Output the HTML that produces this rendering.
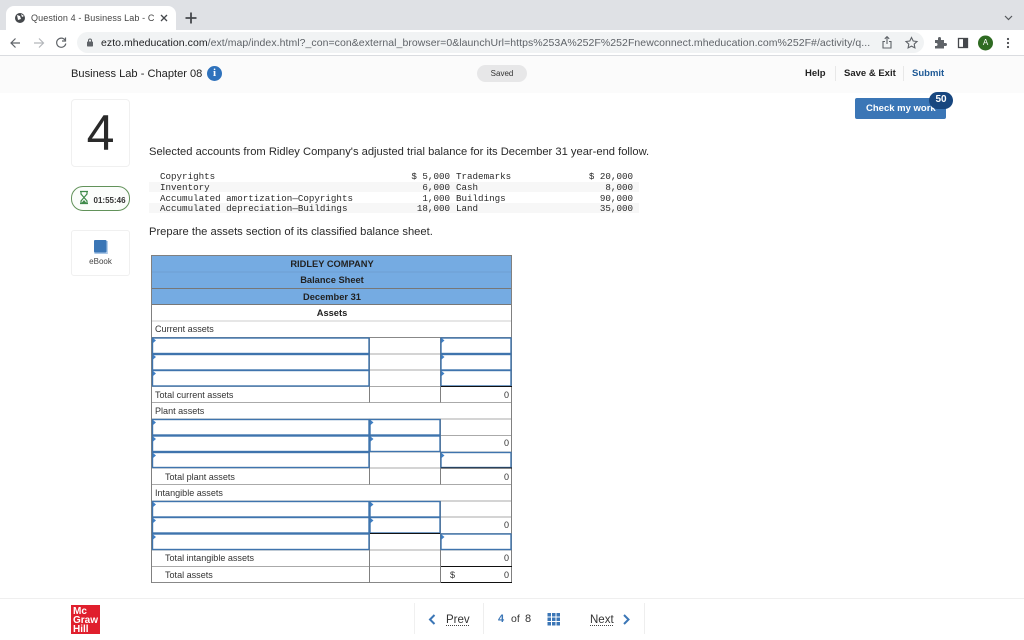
<!DOCTYPE html>
<html lang="en"><head><meta charset="utf-8"><title>Question 4 - Business Lab</title>
<style>
html,body{margin:0;padding:0;background:#fff}
body{width:1024px;height:640px;position:relative;overflow:hidden;font-family:"Liberation Sans",sans-serif;color:#222}
.a{position:absolute;white-space:nowrap}
pre.a{margin:0;font-family:"Liberation Mono",monospace;font-size:9.2px;line-height:10.800px;color:#2a2a2a;white-space:pre}
</style></head><body>
<div class="a" style="left:0;top:0;width:1024px;height:30px;background:#dfe1e5"></div>
<div class="a" style="left:6px;top:6px;width:170px;height:24px;background:#fff;border-radius:8px 8px 0 0"></div>
<div class="a" style="left:77px;top:32px;width:847px;height:21px;border-radius:11px;background:#f1f3f4"></div>
<svg class="a" style="left:0;top:0" width="1024" height="56" viewBox="0 0 1024 56">
<circle cx="20" cy="18" r="5" fill="#45484c"/><path d="M17 15l3 1 1 3-3 1zM21 14l3 2-2 1z" fill="#fff"/>
<path d="M161 15l6 6M167 15l-6 6" stroke="#45484c" stroke-width="1.300"/>
<path d="M191 12.500v11M185.500 18h11" stroke="#45484c" stroke-width="1.800"/>
<path d="M1005 16l3.500 3.500 3.500-3.500" fill="none" stroke="#55585c" stroke-width="1.200"/>
<path d="M20 43h-8.500M15.500 38.500l-4.500 4.500 4.500 4.500" fill="none" stroke="#5f6368" stroke-width="1.200"/>
<path d="M34 43h9M39 38.500l4.500 4.500-4.500 4.500" fill="none" stroke="#b4b7bb" stroke-width="1.200"/>
<path d="M65 40a4.600 4.600 0 1 0 .8 3.500M65.500 37.500v3.500h-3.500" fill="none" stroke="#5f6368" stroke-width="1.200"/>
<rect x="87" y="41.500" width="6" height="5" rx=".8" fill="#5f6368"/><path d="M88.500 42v-1.500a1.500 1.500 0 0 1 3 0V42" fill="none" stroke="#5f6368"/>
<path d="M885 41.500h-2v6.500h8v-6.500h-2M887 44v-7M884.800 38.800l2.200-2.200 2.200 2.200" fill="none" stroke="#5f6368" stroke-width="1.100"/>
<path d="M911.500 37.500l1.700 3.500 3.800.5-2.800 2.600.7 3.800-3.400-1.800-3.400 1.800.7-3.800-2.800-2.600 3.800-.5z" fill="none" stroke="#5f6368" stroke-width="1.100"/>
<path d="M935 40h3v-1.500a1.500 1.500 0 0 1 3 0V40h3v3h1.500a1.500 1.500 0 0 1 0 3H944v2.500h-9V46h1a1.500 1.500 0 0 0 0-3h-1z" fill="#5f6368"/>
<rect x="958.500" y="38.500" width="9" height="9" fill="none" stroke="#45484c" stroke-width="1.300"/><rect x="963" y="38.500" width="5" height="9" fill="#45484c"/>
<circle cx="985.500" cy="43" r="7.500" fill="#2f6b22"/>
<circle cx="1008" cy="39" r="1.100" fill="#45484c"/><circle cx="1008" cy="43" r="1.100" fill="#45484c"/><circle cx="1008" cy="47" r="1.100" fill="#45484c"/>
</svg>
<div class="a" style="left:31px;top:12px;font-size:9px;line-height:12px;color:#444;width:124px;overflow:hidden;letter-spacing:.12px">Question 4 - Business Lab - Ch</div>
<div class="a" style="left:101px;top:36px;font-size:10.500px;line-height:14px;color:#5f6368;width:772px;overflow:hidden;letter-spacing:.05px"><span style="color:#202124">ezto.mheducation.com</span>/ext/map/index.html?_con=con&amp;external_browser=0&amp;launchUrl=https%253A%252F%252Fnewconnect.mheducation.com%252F#/activity/q...</div>
<div class="a" style="left:978px;top:38px;width:15px;text-align:center;font-size:8px;line-height:10px;color:#fff">A</div>
<div class="a" style="left:0;top:55px;width:1024px;height:1px;background:#dadce0"></div>

<div class="a" style="left:0;top:56px;width:1024px;height:37px;background:#fbfbfb"></div>
<div class="a" style="left:71px;top:66.500px;font-size:11.100px;line-height:14px;color:#222">Business Lab - Chapter 08</div>
<div class="a" style="left:207px;top:66px;width:15px;height:15px;border-radius:50%;background:#2f72bc;color:#fff;font:bold 11px/15px 'Liberation Serif',serif;text-align:center">i</div>
<div class="a" style="left:477px;top:65px;width:50px;height:17px;border-radius:9px;background:#e7e7e8;color:#333;font-size:8px;line-height:17px;text-align:center">Saved</div>
<div class="a" style="left:805px;top:68px;font-size:9.500px;line-height:12px;font-weight:bold;color:#222">Help</div>
<div class="a" style="left:835px;top:66px;width:1px;height:15px;background:#e8e8e8"></div>
<div class="a" style="left:844px;top:68px;font-size:9.500px;line-height:12px;font-weight:bold;color:#222">Save &amp; Exit</div>
<div class="a" style="left:903px;top:66px;width:1px;height:15px;background:#e8e8e8"></div>
<div class="a" style="left:912px;top:68px;font-size:9.500px;line-height:12px;font-weight:bold;color:#1f5a96">Submit</div>

<div class="a" style="left:855px;top:98px;width:91px;height:21px;border-radius:2px;background:#3b76b6;color:#fff;font-size:9.500px;font-weight:bold;line-height:21px;text-indent:11px;overflow:hidden">Check my work</div>
<div class="a" style="left:929px;top:92px;width:24px;height:17px;border-radius:9px;background:#17467f;color:#fff;font-size:10px;font-weight:bold;line-height:16px;text-align:center">50</div>

<div class="a" style="left:71px;top:99px;width:57px;height:66px;border:1px solid #f0f0f0;border-radius:4px"></div>
<div class="a" style="left:71px;top:105px;width:59px;text-align:center;font-size:50px;line-height:56px;color:#2a2a2a">4</div>

<div class="a" style="left:71px;top:186px;width:57px;height:23px;border:1px solid #62925a;border-radius:12px;background:#fbfdfb"></div>
<svg class="a" style="left:78px;top:190px" width="12" height="15" viewBox="0 0 12 15"><path d="M2 1.500h8M2 13.500h8M3 1.500v2.500l3 3.500 3-3.500V1.500M3 13.500V11l3-3.500 3 3.500v2.500" fill="none" stroke="#3f8a4a" stroke-width="1.200"/><path d="M3.500 13l2.500-3 2.500 3z" fill="#3f8a4a"/></svg>
<div class="a" style="left:93.500px;top:195px;font-size:8px;font-weight:bold;line-height:12px;color:#333">01:55:46</div>

<div class="a" style="left:71px;top:230px;width:57px;height:44px;border:1px solid #f0f0f0;border-radius:3px"></div>
<svg class="a" style="left:94px;top:240px" width="14" height="15" viewBox="0 0 14 15"><rect x="0" y="0" width="12.500" height="12.500" rx="1" fill="#3b76b6"/><path d="M0 12.500h13v1.500H1.500A1.500 1.500 0 0 1 0 12.500z" fill="#a9c6e6"/><rect x="12.500" y="1" width="1.300" height="13" fill="#a9c6e6"/></svg>
<div class="a" style="left:71px;top:256px;width:59px;text-align:center;font-size:8px;line-height:11px;color:#444">eBook</div>

<div class="a" style="left:149px;top:145px;font-size:11.180px;line-height:14px;color:#2a2a2a">Selected accounts from Ridley Company's adjusted trial balance for its December 31 year-end follow.</div>

<div class="a" style="left:149px;top:182px;width:490px;height:10px;background:#f7f7f7"></div>
<div class="a" style="left:149px;top:203px;width:490px;height:10px;background:#f7f7f7"></div>
<pre class="a" style="left:160px;top:172px">Copyrights
Inventory
Accumulated amortization&#8212;Copyrights
Accumulated depreciation&#8212;Buildings</pre>
<pre class="a" style="left:400px;top:172px;width:50px;text-align:right">$ 5,000
6,000
1,000
18,000</pre>
<pre class="a" style="left:456px;top:172px">Trademarks
Cash
Buildings
Land</pre>
<pre class="a" style="left:573px;top:172px;width:60px;text-align:right">$ 20,000
8,000
90,000
35,000</pre>

<div class="a" style="left:149px;top:225px;font-size:11.180px;line-height:14px;color:#2a2a2a">Prepare the assets section of its classified balance sheet.</div>

<svg class="a" style="left:0;top:0" width="1024" height="640" viewBox="0 0 1024 640" font-family="Liberation Sans, sans-serif" font-size="9.050" fill="#333">
<rect x="152" y="255.500" width="359.500" height="49" fill="#75abe2"/>
<g stroke="#a9a9a9" stroke-width="1" fill="none">
<path d="M152 272h360" stroke="#6f9fd2"/>
<path d="M152 288.500h360M152 304.500h360" stroke="#777"/>
<path d="M152 321h360" stroke="#ccc"/>
<path d="M152 337.500h360" stroke="#888"/>
<path d="M152 354h360M152 370h360M152 386.500h360M152 402.500h360" stroke="#aaa"/>
<path d="M152 419h360M152 435.500h360M152 452h360M152 468h360M152 484.500h360M152 501h360M152 517h360M152 533.500h360M152 550h360M152 566.500h360" stroke="#aaa"/>
<path d="M152 582.500h360" stroke="#888"/>
<path d="M151.500 255v328M511.500 255v328" stroke="#808080"/>
<path d="M152 255.500h360" stroke="#808080"/>
<path d="M369.500 337.500v65M440.500 337.500v65M369.500 419v65.500M440.500 419v65.500M369.500 501v82M440.500 501v82" stroke="#808080"/>
</g>
<g fill="#fff" stroke="#3f74ad" stroke-width="1.400">
<rect x="152.500" y="338" width="216.500" height="15.500"/><rect x="152.500" y="354.500" width="216.500" height="15.500"/><rect x="152.500" y="370.500" width="216.500" height="15.500"/>
<rect x="441" y="338" width="70" height="15.500"/><rect x="441" y="354.500" width="70" height="15.500"/><rect x="441" y="370.500" width="70" height="15.500"/>
<rect x="152.500" y="419.500" width="216.500" height="15.500"/><rect x="152.500" y="436" width="216.500" height="15.500"/><rect x="152.500" y="452.500" width="216.500" height="15"/>
<rect x="370" y="419.500" width="70" height="15.500"/><rect x="370" y="436" width="70" height="15.500"/>
<rect x="441" y="452.500" width="70" height="15"/>
<rect x="152.500" y="501.500" width="216.500" height="15.500"/><rect x="152.500" y="517.500" width="216.500" height="15.500"/><rect x="152.500" y="534" width="216.500" height="15.500"/>
<rect x="370" y="501.500" width="70" height="15.500"/><rect x="370" y="517.500" width="70" height="15.500"/>
<rect x="441" y="534" width="70" height="15.500"/>
</g>
<path d="M441 386.500h71M441 468h71M370 533.500h70M441 566.500h71M441 582.500h71" stroke="#111" stroke-width="1" fill="none"/>
<g fill="#3f7fc4">
<path d="M153 338v5l3-2.500zM153 354.500v5l3-2.500zM153 371v5l3-2.500zM441.500 338v5l3-2.500zM441.500 354.500v5l3-2.500zM441.500 371v5l3-2.500z"/>
<path d="M153 420v5l3-2.500zM153 436.500v5l3-2.500zM153 453v5l3-2.500zM370.500 420v5l3-2.500zM370.500 436.500v5l3-2.500zM441.500 453v5l3-2.500z"/>
<path d="M153 502v5l3-2.500zM153 518v5l3-2.500zM153 534.500v5l3-2.500zM370.500 502v5l3-2.500zM370.500 518v5l3-2.500zM441.500 534.500v5l3-2.500z"/>
</g>
<g font-weight="bold" text-anchor="middle" fill="#222" font-size="9.300">
<text x="332" y="267">RIDLEY COMPANY</text><text x="332" y="283">Balance Sheet</text><text x="332" y="300">December 31</text><text x="332" y="316">Assets</text>
</g>
<text x="155" y="332">Current assets</text>
<text x="155" y="398">Total current assets</text>
<text x="155" y="414">Plant assets</text>
<text x="165" y="480">Total plant assets</text>
<text x="155" y="496">Intangible assets</text>
<text x="165" y="561">Total intangible assets</text>
<text x="165" y="578">Total assets</text>
<text x="450" y="578">$</text>
<g text-anchor="end"><text x="509" y="398">0</text><text x="509" y="446">0</text><text x="509" y="480">0</text><text x="509" y="528">0</text><text x="509" y="561">0</text><text x="509" y="578">0</text></g>
</svg>

<div class="a" style="left:0;top:598px;width:1024px;height:1px;background:#efefef"></div>
<div class="a" style="left:71px;top:605px;width:29px;height:29px;background:#e01f2d;color:#fff;font-size:10px;font-weight:bold;line-height:9px;padding:2px 0 0 2px;box-sizing:border-box;white-space:normal">Mc<br>Graw<br>Hill</div>
<div class="a" style="left:414px;top:603px;width:1px;height:31px;background:#f0f0f0"></div>
<div class="a" style="left:483px;top:603px;width:1px;height:31px;background:#eee"></div>
<div class="a" style="left:644px;top:603px;width:1px;height:31px;background:#eee"></div>
<svg class="a" style="left:425px;top:610px" width="210" height="20" viewBox="0 0 210 20">
<path d="M9.500 5l-4.500 4.500 4.500 4.500" fill="none" stroke="#3b76b6" stroke-width="2"/>
<path d="M199 5l4.500 4.500-4.500 4.500" fill="none" stroke="#3b76b6" stroke-width="2"/>
<g fill="#3b76b6"><rect x="122.500" y="3" width="3.500" height="3.500"/><rect x="127" y="3" width="3.500" height="3.500"/><rect x="131.500" y="3" width="3.500" height="3.500"/><rect x="122.500" y="7.500" width="3.500" height="3.500"/><rect x="127" y="7.500" width="3.500" height="3.500"/><rect x="131.500" y="7.500" width="3.500" height="3.500"/><rect x="122.500" y="12" width="3.500" height="3.500"/><rect x="127" y="12" width="3.500" height="3.500"/><rect x="131.500" y="12" width="3.500" height="3.500"/></g>
<path d="M21 15.500h24M165 15.500h23" stroke="#444" stroke-width="1" stroke-dasharray="1 1" fill="none"/>
</svg>
<div class="a" style="left:446px;top:613px;font-size:11.500px;line-height:14px;color:#333">Prev</div>
<div class="a" style="left:498px;top:612px;font-size:11px;line-height:14px;font-weight:bold;color:#3b76b6">4</div>
<div class="a" style="left:511px;top:612px;font-size:10.500px;line-height:14px;color:#333">of</div>
<div class="a" style="left:525px;top:612px;font-size:11px;line-height:14px;color:#333">8</div>
<div class="a" style="left:590px;top:613px;font-size:11.500px;line-height:14px;color:#333">Next</div>
</body></html>
